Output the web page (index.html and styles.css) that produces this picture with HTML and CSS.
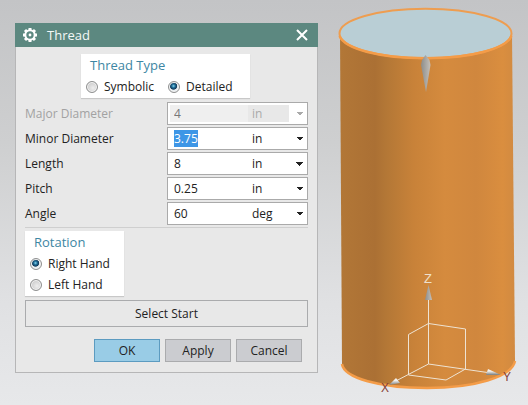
FILE: index.html
```html
<!DOCTYPE html>
<html lang="en">
<head>
<meta charset="utf-8">
<title>Thread</title>
<link rel="stylesheet" href="styles.css">
</head>
<body>
<main class="workspace">
  <form class="dialog" aria-labelledby="dialog-title">
    <header class="titlebar">
      <svg class="gear" viewBox="0 0 16 16" aria-hidden="true">
        <circle cx="8" cy="8" r="4.700" fill="none" stroke="#fff" stroke-width="2"/>
        <circle cx="8" cy="8" r="1.400" fill="#fff"/>
        <path d="M8 1v2M8 13v2M1 8h2M13 8h2M3 3l1.500 1.500M11.500 11.500L13 13M13 3l-1.500 1.500M4.500 11.500L3 13" stroke="#fff" stroke-width="3"/>
      </svg>
      <h1 class="title" id="dialog-title">Thread</h1>
      <button class="close" type="button" aria-label="Close">
        <svg viewBox="0 0 12 12" aria-hidden="true"><path d="M1 1l10 10M11 1L1 11" stroke="#fff" stroke-width="2"/></svg>
      </button>
    </header>
    <div class="content">
      <fieldset class="group group-type">
        <legend class="legend">Thread Type</legend>
        <div class="options">
          <label class="option"><input class="radio" type="radio" name="type">Symbolic</label>
          <label class="option"><input class="radio" type="radio" name="type" checked>Detailed</label>
        </div>
      </fieldset>
      <div class="fields">
        <div class="row disabled">
          <label for="major">Major Diameter</label>
          <div class="combo"><input class="value" id="major" value="4" disabled><select class="unit" aria-label="Major diameter unit" disabled><option>in</option></select></div>
        </div>
        <div class="row">
          <label for="minor">Minor Diameter</label>
          <div class="combo"><input class="value" id="minor" value="3.75"><select class="unit" aria-label="Minor diameter unit"><option>in</option></select></div>
        </div>
        <div class="row">
          <label for="length">Length</label>
          <div class="combo"><input class="value" id="length" value="8"><select class="unit" aria-label="Length unit"><option>in</option></select></div>
        </div>
        <div class="row">
          <label for="pitch">Pitch</label>
          <div class="combo"><input class="value" id="pitch" value="0.25"><select class="unit" aria-label="Pitch unit"><option>in</option></select></div>
        </div>
        <div class="row">
          <label for="angle">Angle</label>
          <div class="combo"><input class="value" id="angle" value="60"><select class="unit" aria-label="Angle unit"><option>deg</option></select></div>
        </div>
      </div>
      <fieldset class="group group-rotation">
        <legend class="legend">Rotation</legend>
        <div class="options stacked">
          <label class="option"><input class="radio" type="radio" name="rotation" checked>Right Hand</label>
          <label class="option"><input class="radio" type="radio" name="rotation">Left Hand</label>
        </div>
      </fieldset>
      <button class="button select-start" type="button">Select Start</button>
      <div class="actions">
        <button class="button primary" type="button">OK</button>
        <button class="button" type="button">Apply</button>
        <button class="button" type="button">Cancel</button>
      </div>
    </div>
  </form>
  <svg class="model" viewBox="318 0 210 405" role="img" aria-label="Cylinder model with axes">
    <defs>
      <linearGradient id="side">
        <stop offset="0" stop-color="#b27737"/>
        <stop offset=".2" stop-color="#ab7034"/>
        <stop offset=".26" stop-color="#b37736"/>
        <stop offset=".42" stop-color="#c88239"/>
        <stop offset=".6" stop-color="#d58b3e"/>
        <stop offset=".78" stop-color="#d0873e"/>
        <stop offset=".93" stop-color="#da8e3f"/>
        <stop offset="1" stop-color="#d18a41"/>
      </linearGradient>
      <linearGradient id="metal">
        <stop offset="0" stop-color="#8e8d89"/>
        <stop offset=".5" stop-color="#a8a6a2"/>
        <stop offset="1" stop-color="#c5c0b8"/>
      </linearGradient>
      <linearGradient id="tip" x2="0" y2="1">
        <stop offset=".35" stop-color="#f4f2ee"/>
        <stop offset="1" stop-color="#777b7c"/>
      </linearGradient>
    </defs>
    <path d="M340 34L342 364C344 378 380 388 427 388S512 377 515 361L512 34Z" fill="url(#side)"/>
    <path d="M342 364C344 378 380 388 427 388S512 377 515 361" fill="none" stroke="#f49c48" stroke-width="2.500"/>
    <ellipse cx="425.500" cy="33.500" rx="86" ry="24.700" fill="#b9ced5" stroke="#ee9d50" stroke-width="2"/>
    <path d="M339.500 36C345 49 380 58.200 425.500 58.200S506 49 511.500 36" fill="none" stroke="#f49c48" stroke-width="2.500"/>
    <path d="M425.500 55l4 5 1 5-4.500 27-5-27 1-5z" fill="url(#metal)"/>
    <g fill="none" stroke="#eee3d3" stroke-width="1">
      <path d="M428.500 364V299M428.500 364L392 383M428.500 364L491 373"/>
      <path d="M428.500 323.500L408.500 334.500V375L446 380L465.500 369V329Z"/>
    </g>
    <path d="M428.500 285l3.500 15h-7z" fill="url(#metal)"/>
    <path d="M389 385l7-7 4 5z" fill="url(#tip)"/>
    <path d="M501 375l-15 0 2-6z" fill="url(#tip)"/>
    <text class="axis axis-z" x="424" y="283">Z</text>
    <text class="axis" x="381" y="392">X</text>
    <text class="axis" x="503" y="381">Y</text>
  </svg>
</main>
<script src="script.js"></script>
</body>
</html>
```
FILE: styles.css
```css
* {
  box-sizing: border-box;
}

body {
  margin: 0;
  min-height: 100vh;
  background: linear-gradient(#c3c4c6, #cecfd0 35%, #e0e1e3 75%, #e7e8ea);
  color: #222;
  font: 12px/16px "Open Sans", "Noto Sans", sans-serif;
}

button,
input,
select {
  margin: 0;
  color: inherit;
  font: inherit;
}

.workspace {
  display: flex;
  align-items: flex-start;
  padding-left: 15px;
}

.dialog {
  flex: 0 1 303px;
  margin-top: 23px;
  border: 1px solid #b6b6b7;
  border-top: 0;
  background: #e8e8e8;
}

.titlebar {
  display: flex;
  align-items: center;
  height: 24px;
  margin: 0 -1px;
  padding: 0 8px 0 7px;
  background: #5c8880;
  color: #f4f8f7;
}

.gear {
  width: 16px;
  height: 16px;
}

.title {
  flex: 1;
  margin: 0 0 0 9px;
  font-size: 13px;
  font-weight: 400;
}

.close {
  display: grid;
  width: 16px;
  height: 16px;
  padding: 2px;
  border: 0;
  background: none;
}

.close svg {
  width: 12px;
  height: 12px;
}

.content {
  display: flex;
  flex-direction: column;
  padding: 7px 9px 10px;
}

.group {
  min-width: 0;
  margin: 0;
  padding: 0 5px 1px;
  border: 0;
  background: #fff;
  box-shadow: 0 1px 1px #c8c8c8;
}

.group-type {
  width: 169px;
  margin-left: 56px;
}

.group-rotation {
  width: 99px;
}

.legend {
  float: left;
  width: 100%;
  padding: 1px 4px;
  color: #3d86a3;
  font-size: 13px;
  line-height: 20px;
}

.options {
  display: flex;
  clear: both;
  gap: 14px;
}

.stacked {
  flex-direction: column;
  gap: 0;
}

.option {
  display: flex;
  align-items: center;
  gap: 6px;
  height: 21px;
  white-space: nowrap;
}

.radio {
  flex: none;
  width: 12px;
  height: 12px;
  appearance: none;
  border: 1px solid #8e8f8f;
  border-radius: 50%;
  background: radial-gradient(circle at 60% 60%, #eee, #ccc 70%);
  box-shadow: inset 0 0 0 1px #f4f4f4;
}

.radio:checked {
  background: radial-gradient(circle at 45% 40%, #8fd8f0 0, #20729c 20%, #12395a 40%, #e8edf0 50%);
}

.fields {
  display: grid;
  gap: 2px;
  margin: 4px 0 3px;
  padding-bottom: 2px;
  border-bottom: 1px solid #cfcfcf;
}

.row {
  display: grid;
  grid-template-columns: 1fr 141px;
  align-items: center;
}

.disabled {
  color: #a2a2a2;
}

.combo {
  display: grid;
  grid-template-columns: 78px 1fr;
  height: 23px;
  padding: 2px;
  border: 1px solid #aaa;
  background: #fff;
}

.value,
.unit {
  width: 100%;
  min-width: 0;
  height: 17px;
  border: 0;
  border-radius: 0;
  outline: 0;
  background: #fff;
}

.value {
  padding: 0 4px;
}

.value::selection {
  background: #3e96e6;
  color: #fff;
}

.unit {
  padding: 0 4px;
  appearance: none;
  background: linear-gradient(to bottom left, #222 50%, transparent 50%) right 5px center / 4px 4px no-repeat,
    linear-gradient(to bottom right, #222 50%, transparent 50%) right 1px center / 4px 4px no-repeat;
}

.value:disabled {
  background: #efefef;
  color: #777;
}

.unit:disabled {
  background: linear-gradient(to bottom left, #aaa 50%, transparent 50%) right 5px center / 4px 4px no-repeat,
    linear-gradient(to bottom right, #aaa 50%, transparent 50%) right 1px center / 4px 4px no-repeat,
    linear-gradient(90deg, #e8e8e8 41px, #fff 41px);
  color: #aaa;
  opacity: 1;
}

.button {
  height: 23px;
  padding: 0;
  border: 1px solid #aaabad;
  background: #cbccd0;
}

.select-start {
  height: 27px;
  margin-top: 4px;
  background: transparent;
}

.actions {
  display: flex;
  justify-content: flex-end;
  gap: 5px;
  margin: 12px 6px 0 0;
}

.actions .button {
  width: 66px;
}

.actions .primary {
  border-color: #5c9bc0;
  background: #99cce6;
}

.model {
  display: block;
  flex: 1;
  min-width: 0;
  height: 100vh;
}

.axis {
  fill: #873f38;
  font: 12px "Liberation Sans", sans-serif;
}

.axis-z {
  fill: #eee0cc;
  font-size: 13px;
}
```
FILE: script.js
```js
const minor = document.getElementById("minor");
minor.focus();
minor.select();
```
